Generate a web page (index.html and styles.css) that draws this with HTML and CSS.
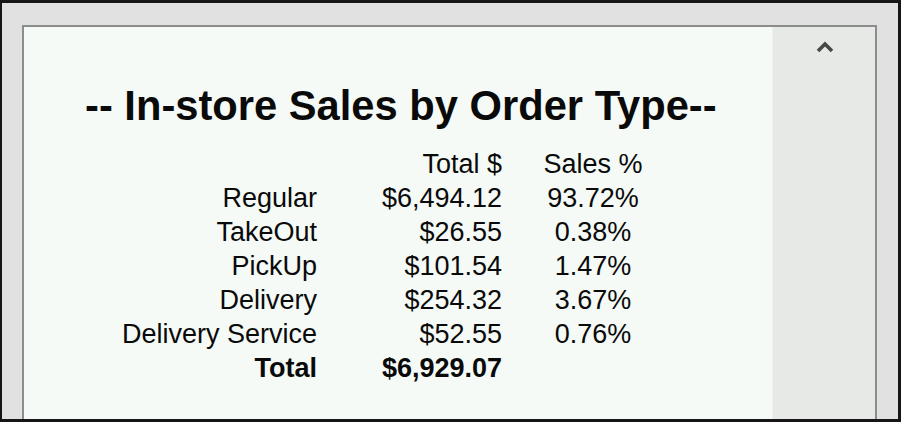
FILE: index.html
```html
<!DOCTYPE html>
<html>
<head>
<meta charset="utf-8">
<link rel="stylesheet" href="styles.css">
</head>
<body>
<div class="frame">
  <div class="panel">
    <div class="content">
      <h1 class="title">-- In-store Sales by Order Type--</h1>
      <div class="table">
        <div class="cell label"></div>
        <div class="cell value">Total $</div>
        <div class="cell pct">Sales %</div>

        <div class="cell label">Regular</div>
        <div class="cell value">$6,494.12</div>
        <div class="cell pct">93.72%</div>

        <div class="cell label">TakeOut</div>
        <div class="cell value">$26.55</div>
        <div class="cell pct">0.38%</div>

        <div class="cell label">PickUp</div>
        <div class="cell value">$101.54</div>
        <div class="cell pct">1.47%</div>

        <div class="cell label">Delivery</div>
        <div class="cell value">$254.32</div>
        <div class="cell pct">3.67%</div>

        <div class="cell label">Delivery Service</div>
        <div class="cell value">$52.55</div>
        <div class="cell pct">0.76%</div>

        <div class="cell label bold">Total</div>
        <div class="cell value bold">$6,929.07</div>
        <div class="cell pct"></div>
      </div>
    </div>
    <div class="scrollbar">
      <svg class="caret" width="20" height="14" viewBox="0 0 20 14">
        <polyline points="3,11 10,4 17,11" fill="none" stroke="#474747" stroke-width="3.6" stroke-linejoin="miter"/>
      </svg>
    </div>
  </div>
</div>
</body>
</html>
```

FILE: styles.css
```css
html, body {
  margin: 0;
  padding: 0;
  background: #ffffff;
}

.frame {
  box-sizing: border-box;
  width: 901px;
  height: 422px;
  border: 3px solid #161616;
  border-left-width: 2px;
  background: #e1e1e1;
  padding: 22px 21px 0 20px;
  overflow: hidden;
}

.panel {
  display: flex;
  height: 420px;
  border: 2px solid #8c8c8c;
  border-bottom: none;
  background: #f5faf6;
  font-family: "Liberation Sans", Arial, sans-serif;
  color: #0a0a0a;
}

.content {
  flex: 1;
  padding: 55px 0 0 61px;
}

.title {
  margin: 0;
  font-size: 41.7px;
  line-height: 48px;
  font-weight: bold;
  white-space: nowrap;
}

.table {
  margin-top: 17px;
  margin-left: 15px;
  display: grid;
  grid-template-columns: 217px 185px 182px;
  font-size: 27px;
  line-height: 34px;
}

.cell {
  white-space: nowrap;
}

.label, .value {
  text-align: right;
}

.pct {
  text-align: center;
}

.bold {
  font-weight: bold;
}

.scrollbar {
  width: 102px;
  background: #e6e9e6;
  border-left: 1px solid #eef2ee;
  display: flex;
  justify-content: center;
  align-items: flex-start;
}

.caret {
  margin-top: 13px;
  margin-left: 2px;
}
```
